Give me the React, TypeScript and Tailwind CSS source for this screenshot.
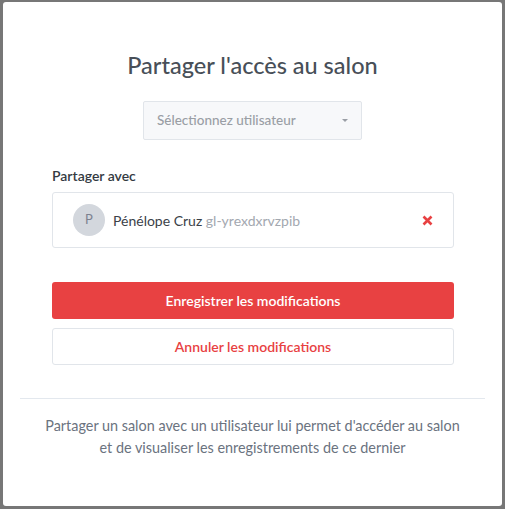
import React from 'react';

const FONT = { fontFamily: 'Lato, "Open Sans", "Liberation Sans", sans-serif' };

const ShareModal: React.FC = () => {
  return (
    <div className="w-[499px] h-[504px] bg-white rounded-[3px] flex flex-col pt-[48px]" style={FONT}>
      {/* Title */}
      <h2 className="text-center text-[23.5px] leading-[30px] text-[#484f58] font-medium">
        Partager l'accès au salon
      </h2>

      {/* User select */}
      <div className="flex justify-center mt-[21px]">
        <button className="w-[219px] h-[39px] bg-[#f7f8fa] border border-[#e1e5ea] rounded-[2px] flex items-center justify-between pl-[13px] pr-[13px] text-[13.5px] text-[#9a9ea5] font-medium">
          <span>Sélectionnez utilisateur</span>
          <span className="w-0 h-0 border-l-[3.5px] border-r-[3.5px] border-t-[3.5px] border-l-transparent border-r-transparent border-t-[#9a9ea5]" />
        </button>
      </div>

      <div className="px-[49px] pr-[48px]">
        <div className="mt-[26px] text-[14px] leading-[20px] font-semibold text-[#333a42]">Partager avec</div>

        {/* Shared user card */}
        <div className="mt-[6px] h-[56px] border border-[#e1e5ea] rounded-[3px] flex items-center pl-[20px] pr-[19px]">
          <div className="w-[32px] h-[32px] rounded-full bg-[#d3d7dd] flex items-center justify-center text-[13px] text-[#7b8190]">
            P
          </div>
          <div className="ml-[8px] flex-1 text-[14px] text-[#3b4148]">
            Pénélope Cruz <span className="text-[#a3a8b0]">gl-yrexdxrvzpib</span>
          </div>
          <svg width="11" height="11" viewBox="0 0 11 11" className="mr-[1px]">
            <path d="M1.5 1.5 L9.5 9.5 M9.5 1.5 L1.5 9.5" stroke="#e84142" strokeWidth="2.6" strokeLinecap="butt" />
          </svg>
        </div>

        {/* Actions */}
        <button className="mt-[34px] w-full h-[37px] bg-[#e84142] rounded-[3px] text-white text-[14px] font-semibold">
          Enregistrer les modifications
        </button>
        <button className="mt-[9px] w-full h-[37px] bg-white border border-[#e1e5ea] rounded-[3px] text-[#e84142] text-[14px] font-semibold">
          Annuler les modifications
        </button>
      </div>

      <div className="mx-[17px] mt-[33px] h-px bg-[#e3e8ee]" />

      <p className="mt-[16px] text-center text-[14.4px] leading-[22px] text-[#6b7380]">
        Partager un salon avec un utilisateur lui permet d'accéder au salon
        <br />
        et de visualiser les enregistrements de ce dernier
      </p>
    </div>
  );
};

export default function App() {
  return (
    <div className="w-[505px] h-[509px] bg-[#777777] pt-[2px] pl-[3px] overflow-hidden">
      <ShareModal />
    </div>
  );
}
